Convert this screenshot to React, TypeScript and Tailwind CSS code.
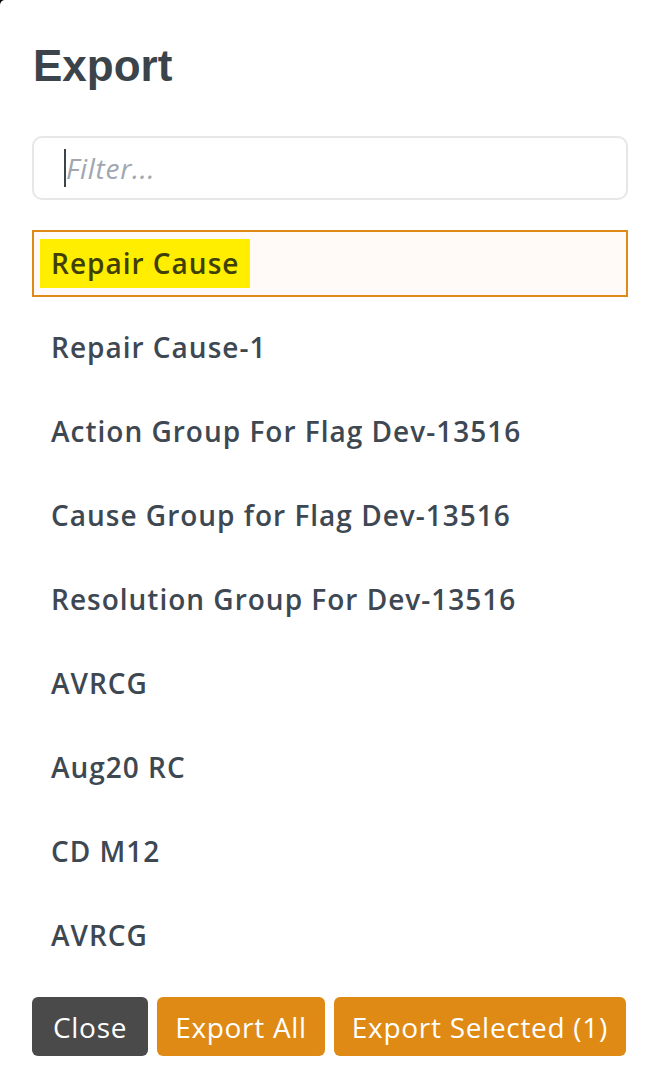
const ITEMS = [
  "Repair Cause",
  "Repair Cause-1",
  "Action Group For Flag Dev-13516",
  "Cause Group for Flag Dev-13516",
  "Resolution Group For Dev-13516",
  "AVRCG",
  "Aug20 RC",
  "CD M12",
  "AVRCG",
];

export default function App() {
  const selected = 0;

  return (
    <div className="min-h-screen bg-black font-['Open_Sans','Liberation_Sans',sans-serif]">
      <div className="min-h-[1084px] rounded-tl-[5px] bg-white pl-[32px] pr-[22px] pt-[44px]">
        <h1 className="pl-[1px] font-['Liberation_Sans',Arial,sans-serif] text-[44px] font-bold leading-none text-[#3b444b]">
          Export
        </h1>

        {/* filter box */}
        <div className="mt-[48px] flex h-[64px] items-center rounded-[10px] border-2 border-[#e7e7e7] pl-[30px]">
          <span className="h-[38px] w-[2px] bg-[#3b444b]" />
          <span className="text-[28px] italic tracking-[0.7px] text-[#a0a7b1]">Filter...</span>
        </div>

        {/* item list */}
        <ul className="mt-[30px] flex flex-col gap-[17px]">
          {ITEMS.map((name, i) => {
            const active = i === selected;
            return (
              <li
                key={i}
                className={
                  "flex h-[67px] items-center border-2 px-[6px] " +
                  (active ? "border-[#df8a18] bg-[#fffaf7]" : "border-transparent")
                }
              >
                <span
                  className={
                    "flex h-[49px] items-center px-[11px] pb-[2px] text-[28px] font-semibold tracking-[1px] " +
                    (active ? "bg-[#ffee00] text-[#3f4008]" : "text-[#3e4852]")
                  }
                >
                  {name}
                </span>
              </li>
            );
          })}
        </ul>

        {/* footer buttons */}
        <div className="mt-[28px] flex gap-[9px]">
          <button className="h-[59px] rounded-[6px] bg-[#4a4a4a] px-[21px] text-[28px] tracking-[0.7px] text-white">
            Close
          </button>
          <button className="h-[59px] rounded-[6px] bg-[#df8a14] px-[18px] text-[28px] tracking-[0.7px] text-white">
            Export All
          </button>
          <button className="h-[59px] rounded-[6px] bg-[#df8a14] px-[18px] text-[28px] tracking-[0.7px] text-white">
            Export Selected (1)
          </button>
        </div>
      </div>
    </div>
  );
}
